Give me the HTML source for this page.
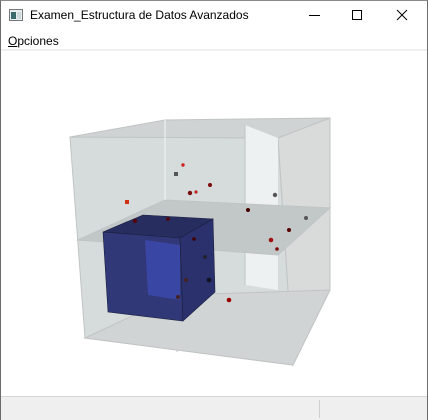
<!DOCTYPE html>
<html><head><style>
body{margin:0;width:428px;height:420px;overflow:hidden;font-family:"Liberation Sans",sans-serif;background:#fff;position:relative}
.win{position:absolute;left:0;top:0;width:426px;height:418px;border:1px solid #6b6b6b;border-top:1px solid #8a8a8a}
.title{position:absolute;left:30px;top:8px;font-size:12px;color:#000}
.menu{position:absolute;left:8px;top:34px;font-size:12px}
.sb{position:absolute;left:1px;top:396px;width:426px;height:23px;background:#efefef;border-top:1px solid #d6d6d6}
</style></head><body>
<div class="win"></div>
<svg style="position:absolute;left:9px;top:9px" width="14" height="12"><rect x="0.5" y="0.5" width="13" height="11" fill="#e8eef0" stroke="#777"/><rect x="2" y="3" width="5" height="7" fill="#3a6a6a"/><rect x="8" y="3" width="4" height="7" fill="#cfd8dc"/></svg>
<div class="title">Examen_Estructura de Datos Avanzados</div>
<svg style="position:absolute;left:306px;top:8px" width="110" height="14" stroke="#000" fill="none" stroke-width="1"><line x1="3" y1="7.5" x2="14" y2="7.5"/><rect x="46.5" y="2.5" width="9" height="9"/><path d="M91 2 L101 12 M101 2 L91 12"/></svg>
<div class="menu"><u>O</u>pciones</div>
<div style="position:absolute;left:1px;top:49px;width:426px;height:2px;background:#f0f0f0"></div>
<svg style="position:absolute;left:0;top:0" width="428" height="420">
<g stroke="#c0c4c4" stroke-width="1">
<polygon points="70,137 278,138 293,365 85,338" fill="#d6dbdb"/>
<polygon points="70,137 165,120 330,118 278,138" fill="#cfd3d3"/>
<polygon points="278,138 330,118 330,290 293,365" fill="#d9dbdb"/>
<polygon points="245,125 278,138 278,290 245,285" fill="#edf1f1" stroke="none"/>
<polygon points="78,240 165,200 330,208 278,255" fill="#c2c7c7"/>
<line x1="165" y1="120" x2="165" y2="200" stroke="#f0f4f4"/>
<line x1="177" y1="295" x2="177" y2="352"/>
<polygon points="85,338 177,295 330,290 293,365" fill="#d0d4d4"/>
<line x1="245" y1="125" x2="245" y2="285"/>
</g>
<g stroke="#1a1f40" stroke-width="0.6">
<polygon points="103,232 143,215 213,219 180,238" fill="#272d5e"/>
<polygon points="103,232 180,238 183,321 108,312" fill="#303877"/>
<polygon points="180,238 213,219 215,292 183,321" fill="#2a316c"/>
<polygon points="145,240 180,245 180,300 148,295" fill="#3a46a4" stroke="none"/>
</g>
<g fill="#7a0c0c">
<circle cx="183" cy="165" r="1.7" fill="#d02020"/><rect x="174" y="172" width="4" height="4" fill="#555"/>
<circle cx="210" cy="185" r="2"/><circle cx="190" cy="193" r="2.2"/><circle cx="196" cy="192" r="1.6" fill="#c02020"/>
<rect x="125" y="200" width="4" height="4" fill="#d03010"/><circle cx="275" cy="195" r="2.2" fill="#555"/>
<circle cx="248" cy="210" r="2" fill="#400"/><circle cx="306" cy="218" r="2" fill="#555"/>
<circle cx="135" cy="221" r="2" fill="#500"/><circle cx="168" cy="219" r="1.8" fill="#500"/>
<circle cx="289" cy="230" r="2" fill="#500"/><circle cx="194" cy="239" r="1.8" fill="#400"/>
<circle cx="271" cy="240" r="2.3" fill="#a01010"/><circle cx="277" cy="249" r="1.8"/>
<circle cx="205" cy="257" r="2" fill="#223"/><circle cx="186" cy="280" r="2" fill="#422"/>
<circle cx="209" cy="280" r="2.3" fill="#112"/><circle cx="178" cy="297" r="2" fill="#422"/>
<circle cx="229" cy="300" r="2.3" fill="#900"/>
</g>
</svg>
<div class="sb"><div style="position:absolute;left:318px;top:3px;width:1px;height:18px;background:#d0d0d0"></div></div>
</body></html>
